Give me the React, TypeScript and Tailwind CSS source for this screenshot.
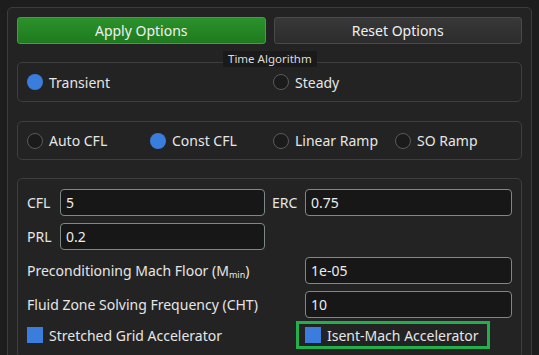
import React from "react";

const Radio = ({ label, checked }: { label: string; checked?: boolean }) => (
  <div className="flex items-center gap-[6px]">
    {checked ? (
      <span className="w-[16px] h-[16px] rounded-full bg-[#3b7ddd]" />
    ) : (
      <span className="w-[16px] h-[16px] rounded-full bg-[#1b1b1b] border border-[#5a5a5a]" />
    )}
    <span>{label}</span>
  </div>
);

const Field = ({ value }: { value: string }) => (
  <div className="flex-1 h-[27px] flex items-center px-[5px] bg-[#171717] border-[1.5px] border-[#7b8a89] rounded-[4px] text-[#ececec]">
    {value}
  </div>
);

const Check = ({ label }: { label: string }) => (
  <div className="flex items-center gap-[6px]">
    <span className="w-[16px] h-[16px] bg-[#3b7ddd]" />
    <span>{label}</span>
  </div>
);

export default function App() {
  return (
    <div
      className="w-[539px] h-[355px] overflow-hidden bg-[#1d1d1d] pt-[7px] pl-[7px] pr-[7px] text-[14px] text-[#e6e6e6]"
      style={{ fontFamily: '"Noto Sans", "Open Sans", sans-serif' }}
    >
      <div className="h-[360px] bg-[#232323] border border-[#3c3c3c] rounded-[5px] p-[9px]">
        <div className="flex gap-[8px]">
          <button className="flex-1 h-[27px] rounded-[3px] border border-[#3da33d] bg-gradient-to-b from-[#2a922a] to-[#1f7a1f] text-[#f0f0f0]">
            Apply Options
          </button>
          <button className="flex-1 h-[27px] rounded-[3px] border border-[#4a4a4a] bg-gradient-to-b from-[#383838] to-[#2c2c2c] text-[#f0f0f0]">
            Reset Options
          </button>
        </div>

        <div className="relative mt-[18px] h-[40px] border border-[#3e3e3e] rounded-[5px] grid grid-cols-[246px_1fr] items-center pl-[9px]">
          <span className="absolute left-[205px] top-[-12px] px-[5px] h-[16px] flex items-center bg-[#1a1a1a] text-[11.5px] text-[#dcdcdc]">
            Time Algorithm
          </span>
          <Radio label="Transient" checked />
          <Radio label="Steady" />
        </div>

        <div className="mt-[19px] h-[39px] border border-[#3e3e3e] rounded-[5px] grid grid-cols-[123px_123px_122px_1fr] items-center pl-[9px]">
          <Radio label="Auto CFL" />
          <Radio label="Const CFL" checked />
          <Radio label="Linear Ramp" />
          <Radio label="SO Ramp" />
        </div>

        <div className="mt-[18px] h-[180px] border border-[#3e3e3e] rounded-[5px] pl-[9px] pr-[9px] pt-[10px] flex flex-col gap-[7px]">
          <div className="flex">
            <div className="w-[245px] flex items-center gap-[6px] pr-[7px]">
              <span className="w-[27px]">CFL</span>
              <Field value="5" />
            </div>
            <div className="flex-1 flex items-center gap-[5px]">
              <span className="w-[28px]">ERC</span>
              <Field value="0.75" />
            </div>
          </div>
          <div className="flex">
            <div className="w-[245px] flex items-center gap-[6px] pr-[7px]">
              <span className="w-[27px]">PRL</span>
              <Field value="0.2" />
            </div>
          </div>
          <div className="flex">
            <div className="w-[245px] flex items-center">
              <span>
                Preconditioning Mach Floor (M<sub className="text-[9px]">min</sub>)
              </span>
            </div>
            <div className="flex-1 flex items-center pl-[33px]">
              <Field value="1e-05" />
            </div>
          </div>
          <div className="flex">
            <div className="w-[245px] flex items-center whitespace-nowrap">
              <span>Fluid Zone Solving Frequency (CHT)</span>
            </div>
            <div className="flex-1 flex items-center pl-[33px]">
              <Field value="10" />
            </div>
          </div>
          <div className="flex items-center -mt-[4px]">
            <div className="w-[269px]">
              <Check label="Stretched Grid Accelerator" />
            </div>
            <div className="h-[28px] flex items-center border-[3px] border-[#21b04b] pl-[6px] pr-[8px]">
              <Check label="Isent-Mach Accelerator" />
            </div>
          </div>
        </div>
      </div>
    </div>
  );
}
